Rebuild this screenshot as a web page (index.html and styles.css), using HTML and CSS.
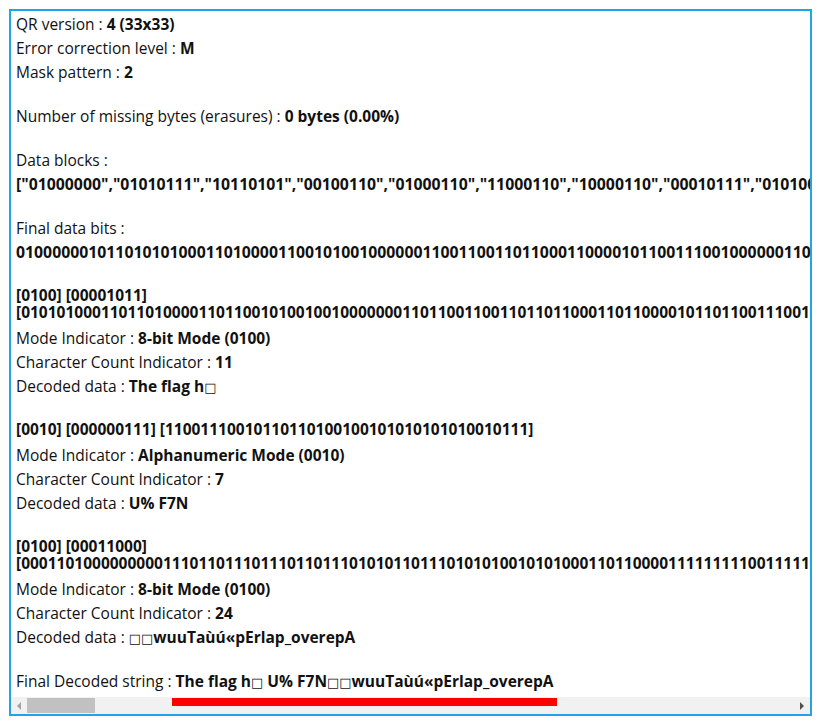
FILE: index.html
```html
<!DOCTYPE html>
<html lang="en">
<head>
  <meta charset="UTF-8" />
  <meta name="viewport" content="width=device-width, initial-scale=1.0" />
  <title>QR Decoder</title>
  <link rel="stylesheet" href="styles.css">
</head>
<body>
  <div class="panel">
    <div class="content">
      <div class="group">
        <div class="line">QR version : <b>4 (33x33)</b></div>
        <div class="line">Error correction level : <b>M</b></div>
        <div class="line">Mask pattern : <b>2</b></div>
      </div>

      <div class="group">
        <div class="line">Number of missing bytes (erasures) : <b>0 bytes (0.00%)</b></div>
      </div>

      <div class="group">
        <div class="line">Data blocks :</div>
        <div class="line"><b class="wide">["01000000","01010111","10110101","00100110","01000110","11000110","10000110","00010111","01010011","01100010","00000110"]</b></div>
      </div>

      <div class="group">
        <div class="line">Final data bits :</div>
        <div class="line"><b class="wide">0100000010110101010001101000011001010010000001100110011011000110000101100111001000000110100110111001</b></div>
      </div>

      <div class="bits">
        <div>[0100] [00001011]</div>
        <div>[0101010001101101000011011001010010010000000110110011001101101100011011000010110110011100100110100111]</div>
      </div>
      <div class="line">Mode Indicator : <b>8-bit Mode (0100)</b></div>
      <div class="line">Character Count Indicator : <b>11</b></div>
      <div class="line">Decoded data : <b>The flag h<span class="tofu">&#9633;</span></b></div>

      <div class="bits">
        <div>[0010] [000000111] [11001110010110110100100101010101010010111]</div>
      </div>
      <div class="line">Mode Indicator : <b>Alphanumeric Mode (0010)</b></div>
      <div class="line">Character Count Indicator : <b>7</b></div>
      <div class="line">Decoded data : <b>U% F7N</b></div>

      <div class="bits">
        <div>[0100] [00011000]</div>
        <div>[000110100000000011101101110111011011101010110111010101001010100011011000011111111100111111101101]</div>
      </div>
      <div class="line">Mode Indicator : <b>8-bit Mode (0100)</b></div>
      <div class="line">Character Count Indicator : <b>24</b></div>
      <div class="line">Decoded data : <span class="tofu">&#9633;&#9633;</span><b>wuuTaùú«pErlap_overepA</b></div>

      <div class="group">
        <div class="line">Final Decoded string : <b>The flag h<span class="tofu">&#9633;</span> U% F7N<span class="tofu">&#9633;&#9633;</span>wuuTaùú«pErlap_overepA</b></div>
      </div>
    </div>

    <div class="scrollbar">
      <span class="arrow left"></span>
      <div class="track"><div class="thumb"></div></div>
      <span class="arrow right"></span>
    </div>

    <div class="mark"></div>
  </div>
</body>
</html>
```

FILE: styles.css
```css
body {
  margin: 9px 10px 0 9px;
  background: white;
  font-family: "Open Sans", "DejaVu Sans", sans-serif;
  font-size: 15.5px;
  color: #111;
}
.panel {
  position: relative;
  border: 2px solid #1fa5e6;
  height: 703px;
  display: flex;
  flex-direction: column;
}
.content {
  flex: 1;
  overflow: hidden;
  white-space: nowrap;
  padding: 1px 5px 0;
}
.line {
  line-height: 24px;
}
.wide {
  font-size: 15.8px;
}
.tofu {
  font-family: "DejaVu Sans", sans-serif;
  font-weight: normal;
  font-size: 13px;
  line-height: 0;
}
.group {
  margin-top: 20px;
}
.group:first-child {
  margin-top: 0;
}
.bits {
  margin-top: 23px;
  margin-bottom: 5px;
  line-height: 17px;
  font-weight: bold;
}
.scrollbar {
  height: 17px;
  background: #f1f1f1;
  display: flex;
  align-items: center;
}
.arrow {
  width: 16px;
  height: 17px;
  display: flex;
  align-items: center;
  justify-content: center;
}
.arrow::before {
  content: "";
  border-top: 4px solid transparent;
  border-bottom: 4px solid transparent;
}
.arrow.left::before {
  border-right: 4px solid #a3a3a3;
}
.arrow.right::before {
  border-left: 4px solid #505050;
}
.track {
  flex: 1;
  height: 17px;
  display: flex;
  align-items: center;
}
.thumb {
  width: 68px;
  height: 15px;
  background: #c1c1c1;
}
.mark {
  position: absolute;
  left: 161px;
  top: 687px;
  width: 385px;
  height: 8px;
  background: #ff0000;
}
```
